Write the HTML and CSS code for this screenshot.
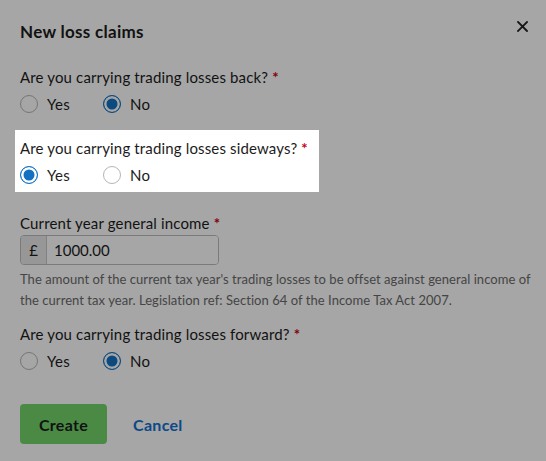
FILE: index.html
```html
<!DOCTYPE html>
<html lang="en">
<head>
<meta charset="utf-8">
<title>New loss claims</title>
<link rel="stylesheet" href="styles.css">
</head>
<body>
<div class="dialog">
  <header class="dialog-header">
    <h1 class="dialog-title">New loss claims</h1>
    <button class="close-btn" aria-label="Close">
      <svg width="11" height="11" viewBox="0 0 11 11"><path d="M1 1L10 10M10 1L1 10" stroke="#222" stroke-width="1.8" stroke-linecap="square"/></svg>
    </button>
  </header>

  <form class="dialog-body">
    <fieldset class="field field-back">
      <legend class="label">Are you carrying trading losses back? <span class="req">*</span></legend>
      <div class="options">
        <label class="option"><input type="radio" name="back" class="radio"> Yes</label>
        <label class="option"><input type="radio" name="back" class="radio" checked> No</label>
      </div>
    </fieldset>

    <fieldset class="field spotlight">
      <legend class="label">Are you carrying trading losses sideways? <span class="req">*</span></legend>
      <div class="options">
        <label class="option"><input type="radio" name="side" class="radio" checked> Yes</label>
        <label class="option"><input type="radio" name="side" class="radio"> No</label>
      </div>
    </fieldset>

    <div class="field field-income">
      <label class="label" for="income">Current year general income <span class="req">*</span></label>
      <div class="money">
        <span class="money-prefix">£</span>
        <input id="income" class="money-input" type="text" value="1000.00">
      </div>
      <p class="help">The amount of the current tax year's trading losses to be offset against general income of the current tax year. Legislation ref: Section 64 of the Income Tax Act 2007.</p>
    </div>

    <fieldset class="field field-forward">
      <legend class="label">Are you carrying trading losses forward? <span class="req">*</span></legend>
      <div class="options">
        <label class="option"><input type="radio" name="fwd" class="radio"> Yes</label>
        <label class="option"><input type="radio" name="fwd" class="radio" checked> No</label>
      </div>
    </fieldset>

    <div class="actions">
      <button type="button" class="btn-create">Create</button>
      <button type="button" class="btn-cancel">Cancel</button>
    </div>
  </form>

  <div class="overlay"></div>
</div>
</body>
</html>
```

FILE: styles.css
```css
* { box-sizing: border-box; }

html, body {
  margin: 0;
  padding: 0;
}

body {
  font-family: Lato, "Noto Sans", sans-serif;
  color: #1c1c1c;
  background: #fff;
}

.dialog {
  position: relative;
  min-height: 100vh;
  background: #fff;
  padding: 20px 18px 16px 20px;
}

.overlay {
  position: absolute;
  inset: 0;
  background: rgba(0, 0, 0, 0.35);
  z-index: 1;
}

.dialog-header {
  display: flex;
  align-items: flex-start;
  justify-content: space-between;
}

.dialog-title {
  margin: 0;
  font-size: 17px;
  line-height: 24px;
  font-weight: 700;
  letter-spacing: 0.3px;
}

.close-btn {
  border: 0;
  background: none;
  padding: 0;
  margin-top: 1px;
  width: 11px;
  height: 11px;
  display: flex;
}

.dialog-body {
  margin: 0;
}

.field {
  border: 0;
  margin: 0;
  padding: 0;
  min-width: 0;
}

.label {
  display: block;
  float: left;
  width: 100%;
  padding: 0;
  font-size: 15px;
  line-height: 20px;
  letter-spacing: 0.15px;
}

.field-income .label { float: none; }

.req {
  color: #c8001a;
  font-weight: 700;
}

.options {
  clear: both;
  display: flex;
  gap: 33px;
  padding-top: 7px;
}

.option {
  display: inline-flex;
  align-items: center;
  gap: 9px;
  font-size: 15px;
  line-height: 20px;
  letter-spacing: 0.3px;
}

.radio {
  appearance: none;
  -webkit-appearance: none;
  margin: 0;
  width: 18px;
  height: 18px;
  border-radius: 50%;
  border: 1px solid #b5b5b5;
  background: #fff;
}

.radio:checked {
  border: 1.5px solid #1371c4;
  background: #1371c4;
  box-shadow: inset 0 0 0 2.5px #fff;
}

.field-back {
  margin-top: 23px;
}

.spotlight {
  position: relative;
  z-index: 2;
  background: #fff;
  width: 304px;
  margin: 16px 0 0 -5px;
  padding: 8px 5px 7px 5px;
}

.field-income {
  margin-top: 21px;
}

.money {
  display: flex;
  width: 199px;
  height: 30px;
  margin-top: 2px;
  border: 1px solid #bcbcbc;
  border-radius: 4px;
  overflow: hidden;
}

.money-prefix {
  width: 26px;
  flex: none;
  display: flex;
  align-items: center;
  justify-content: center;
  background: #e8e8e8;
  border-right: 1px solid #c8c8c8;
  font-size: 15px;
}

.money-input {
  flex: 1;
  min-width: 0;
  border: 0;
  padding: 0 0 0 7px;
  font-family: inherit;
  font-size: 15px;
  color: #1c1c1c;
  background: #fff;
  outline: none;
}

.help {
  margin: 4px -24px 0 0;
  font-size: 13px;
  line-height: 21px;
  color: #6b6b6b;
  letter-spacing: 0.05px;
}

.field-forward {
  margin-top: 13px;
}

.actions {
  display: flex;
  align-items: center;
  gap: 26px;
  margin-top: 33px;
}

.btn-create {
  width: 87px;
  height: 40px;
  border: 0;
  border-radius: 4px;
  background: #72d46b;
  color: #1c1c1c;
  font-family: inherit;
  font-size: 16px;
  font-weight: 700;
  letter-spacing: 0.3px;
}

.btn-cancel {
  border: 0;
  background: none;
  padding: 0;
  color: #1270cf;
  font-family: inherit;
  font-size: 16px;
  font-weight: 700;
  letter-spacing: 0.3px;
}
```
